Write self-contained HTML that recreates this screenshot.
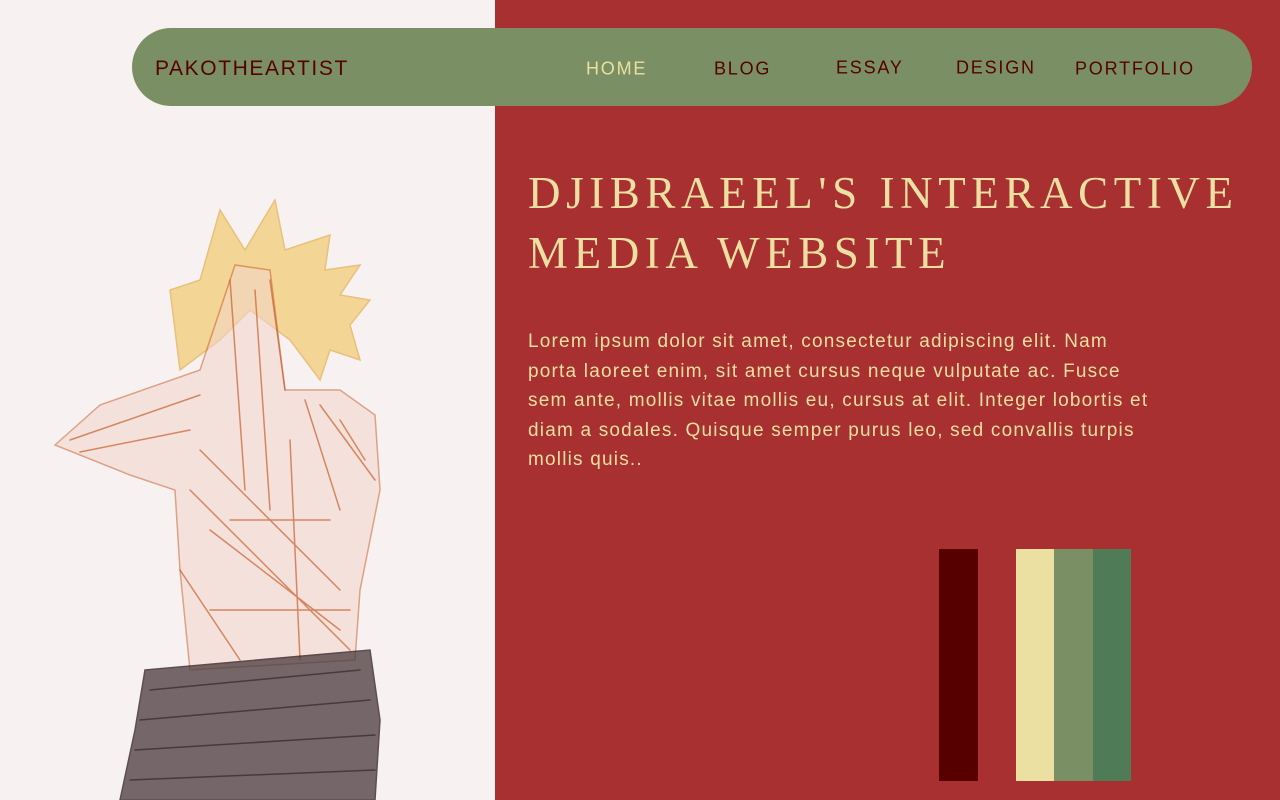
<!DOCTYPE html>
<html><head><style>
body{margin:0;width:1280px;height:800px;overflow:hidden;position:relative;background:#f7f1f1;font-family:"Liberation Sans",sans-serif}
.red{position:absolute;left:495px;top:0;width:785px;height:800px;background:#a83030}
.nav{position:absolute;left:132px;top:28px;width:1120px;height:78px;border-radius:39px;background:#7a9064}
.nav span{position:absolute;font-size:18px;letter-spacing:1.8px;color:#560000;top:41px;transform:translateY(-50%)}
h1{position:absolute;left:528px;top:163px;margin:0;font-family:"Liberation Serif",serif;font-weight:normal;font-size:45px;line-height:60px;letter-spacing:5.6px;color:#ecdfa2;white-space:nowrap}
p{position:absolute;left:528px;top:327px;margin:0;font-size:19px;line-height:29.5px;color:#ecdfa2;letter-spacing:1.2px;white-space:nowrap}
.sw{position:absolute;top:549px;height:232px;width:39px}
</style></head><body>
<div class="red"></div>
<svg style="position:absolute;left:40px;top:190px" width="360" height="610" viewBox="0 0 360 610">
<g fill="none" stroke-linecap="round">
<path d="M140 180 L130 100 L160 90 L180 20 L205 60 L235 10 L245 60 L290 45 L285 80 L320 75 L300 105 L330 110 L310 135 L320 170 L290 160 L280 190 L250 150 L210 120 L180 150 L140 180Z" fill="#f2c35a" opacity=".6" stroke="#e0a030" stroke-width="1.5"/>
<path d="M15 255 L60 215 L160 180 L195 75 L230 80 L245 200 L300 200 L335 225 L340 300 L320 400 L315 470 L150 480 L140 380 L135 300 L90 285 L15 255Z" fill="#f2d5cc" opacity=".55" stroke="#c8602a" stroke-width="1.5"/>
<path d="M30 250 L160 205 M40 262 L150 240 M190 90 L205 300 M215 100 L230 320 M230 90 L245 200 M265 210 L300 320 M280 215 L335 290 M160 260 L300 400 M150 300 L310 460 M170 340 L300 440 M190 330 L290 330 M170 420 L310 420 M300 230 L325 270 M140 380 L200 470 M250 250 L260 470" stroke="#c8602a" stroke-width="1.5" opacity=".7"/>
<path d="M105 480 L330 460 L340 530 L335 610 L80 610 L95 540Z" fill="#4a3a3c" opacity=".75" stroke="#2a1a1a" stroke-width="1.5"/>
<path d="M110 500 L320 480 M100 530 L330 510 M95 560 L335 545 M90 590 L335 580" stroke="#2a1a1a" stroke-width="1.5" opacity=".6"/>
</g></svg>
<div class="nav">
<span style="left:23px;font-size:21px;letter-spacing:1.6px">PAKOTHEARTIST</span>
<span style="left:454px;color:#ecdfa2">HOME</span>
<span style="left:582px">BLOG</span>
<span style="left:704px;top:40px">ESSAY</span>
<span style="left:824px;top:40px">DESIGN</span>
<span style="left:943px">PORTFOLIO</span>
</div>
<h1>DJIBRAEEL'S INTERACTIVE<br>MEDIA WEBSITE</h1>
<p>Lorem ipsum dolor sit amet, consectetur adipiscing elit. Nam<br>porta laoreet enim, sit amet cursus neque vulputate ac. Fusce<br>sem ante, mollis vitae mollis eu, cursus at elit. Integer lobortis et<br>diam a sodales. Quisque semper purus leo, sed convallis turpis<br>mollis quis..</p>
<div class="sw" style="left:939px;background:#560000"></div>
<div class="sw" style="left:1016px;background:#ecdfa2"></div>
<div class="sw" style="left:1054px;background:#7a9064"></div>
<div class="sw" style="left:1093px;width:38px;background:#4f7b57"></div>
</body></html>
